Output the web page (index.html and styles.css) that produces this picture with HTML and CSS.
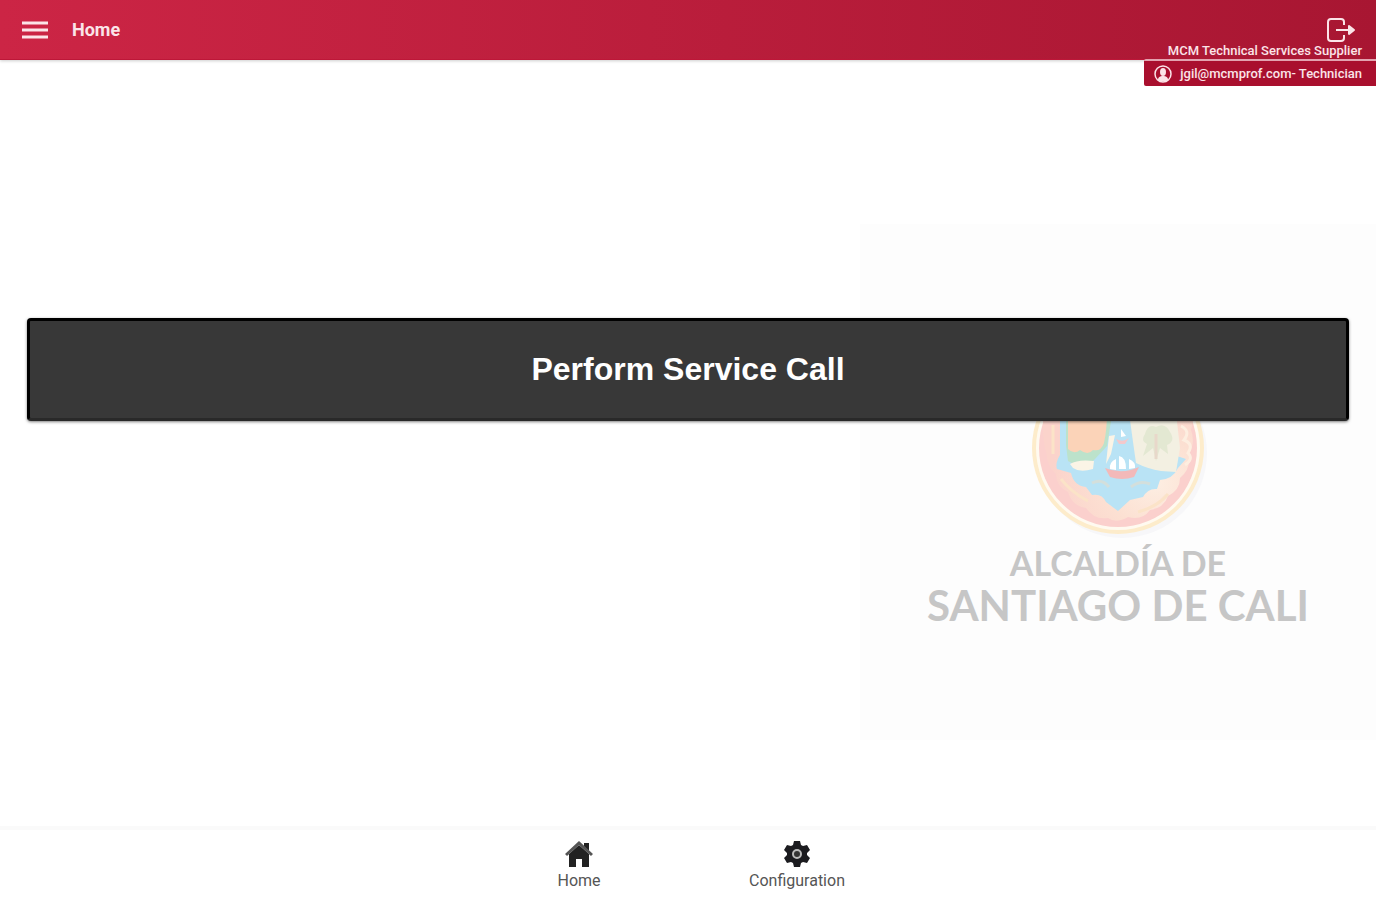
FILE: index.html
```html
<!DOCTYPE html>
<html lang="en">
<head>
    <title>Home</title>
    <meta charset="UTF-8">
    <meta name="viewport" content="width=device-width, initial-scale=1.0">
    <link rel="stylesheet" href="styles.css">
</head>
<body>
    <header class="toolbar">
        <button class="icon-btn" aria-label="Menu">
            <svg width="26" height="20" viewBox="0 0 26 20" stroke="currentColor" stroke-width="3">
                <path d="M0 3h26M0 10h26M0 17h26"/>
            </svg>
        </button>
        <h1>Home</h1>
        <div class="session">
            <button class="icon-btn" aria-label="Log out">
                <svg width="30" height="26" viewBox="0 0 30 26" fill="none" stroke="currentColor" stroke-width="2" stroke-linejoin="round">
                    <path d="M18 8V5a3 3 0 0 0-3-3H5a3 3 0 0 0-3 3v16a3 3 0 0 0 3 3h10a3 3 0 0 0 3-3v-3M10 13h17"/>
                    <path d="M23 9l5 4-5 4z" fill="currentColor"/>
                </svg>
            </button>
            <span>MCM Technical Services Supplier</span>
        </div>
        <div class="account">
            <svg width="18" height="18" viewBox="0 0 18 18">
                <circle cx="9" cy="9" r="8" fill="none" stroke="currentColor" stroke-width="1.5"/>
                <ellipse cx="9" cy="7" rx="3" ry="4" fill="currentColor"/>
                <path d="M4 15c0-3 2-4 5-4s5 1 5 4c-3 2-7 2-10 0z" fill="currentColor"/>
            </svg>
            <span>jgil@mcmprof.com- Technician</span>
        </div>
    </header>

    <main>
        <div class="watermark">
            <svg class="emblem" viewBox="0 0 180 180" width="180" height="180">
                <defs>
                    <radialGradient id="rim" cx="0.75" cy="0.7" r="0.7">
                        <stop offset="0" stop-color="#fdeee2"/>
                        <stop offset="0.5" stop-color="#fce0d2"/>
                        <stop offset="1" stop-color="#fbd3cb"/>
                    </radialGradient>
                </defs>
                <circle cx="94" cy="95" r="85" fill="#f7f7f9"/>
                <circle cx="90" cy="90" r="86" fill="#fdeccb"/>
                <circle cx="90" cy="90" r="82" fill="#fffaf0"/>
                <circle cx="90" cy="90" r="79" fill="#fbd0cd"/>
                <path d="M18 40Q12 72 18 94q2 16 10 22 0 12 12 18 4 14 18 16 8 12 22 10 8 6 20-1 14 4 22-7 14-2 18-14 12-6 12-18 12-10 8-24 8-10 3-24 6-20-4-35z" fill="url(#rim)"/>
                <path d="M32 55v42q-5 8-3 14l14 4q3 13 15 14l6 8q10-2 14 7l12 9 12-11 13-3q5-9 14-8l3-9q13-1 18-12l8-9-9-3V55z" fill="#b9e3f5"/>
                <path d="M38 55v32l2 16q14 9 26-1l13-14 5-31z" fill="#bce2cb"/>
                <path d="M40 55v36q6 6 12 1 8 6 13 0 8 2 11-7 3-14 3-30z" fill="#fbd3b8"/>
                <path d="M42 106q8-5 24-3l-1 8q-13 4-20-1zM81 78l6-1-4 19-5 10z" fill="#fbf4e6"/>
                <path d="M101 55l5 36 2 14q12 6 25 8l15 1 4-24-4-35z" fill="#f3f0e2"/>
                <path d="M117 76q3-11 11-7 9-5 14 5 6 9-3 13l1 9-8-6-4 13-3-13-10 8 4-12q-7-3-2-10z" fill="#e3e8d2"/>
                <path d="M128 76v25" stroke="#e8d8ca" stroke-width="3"/>
                <path d="M77 110q17 7 34-1l-5 10q-12 4-24 0z" fill="#f3b9b9"/>
                <path d="M82 111q-1-7 6-10v11zM91 111V98q7 1 7 13zM101 111v-10q7 3 6 9z" fill="#fff"/>
                <path d="M88 81q7 4 13-1l-4 6h-6z" fill="#f4c8cb"/>
                <path d="M93 79v-8l5 7z" fill="#fff"/>
                <path d="M64 125q10-5 17 4M103 129q9-7 19-3" fill="none" stroke="#d3dfdc" stroke-width="3"/>
                <path d="M153 68q10 5 3 14 10 4 4 13 6 6-3 12" fill="none" stroke="#fdeee0" stroke-width="3"/>
                <path d="M25 67v29M33 121q10 13 27 22M110 154q19-5 30-18" fill="none" stroke="#fbe3c8" stroke-width="3"/>
            </svg>
            <p>ALCALDÍA DE</p>
            <p class="city">SANTIAGO DE CALI</p>
        </div>
        <button class="call-btn">Perform Service Call</button>
    </main>

    <nav class="tabs">
        <a href="#home">
            <svg width="28" height="28" viewBox="0 0 28 28">
                <path d="M19 3h5v8l-5-4z" fill="#222"/>
                <path d="M4 14l10-9 10 9v13h-7v-8h-6v8H4z" fill="#222"/>
                <path d="M1 15L14 3l13 12" fill="none" stroke="#555" stroke-width="3"/>
            </svg>
            Home
        </a>
        <a href="#configuration">
            <svg width="28" height="28" viewBox="0 0 28 28">
                <path d="M11 1h6l1 4 2 1 4-1 3 5-3 3v2l3 3-3 5-4-1-2 1-1 4h-6l-1-4-2-1-4 1-3-5 3-3v-2l-3-3 3-5 4 1 2-1z" fill="#1b1b1f"/>
                <circle cx="14" cy="14" r="4" fill="#333" stroke="#bbb" stroke-width="2"/>
            </svg>
            Configuration
        </a>
    </nav>
</body>
</html>
```
FILE: styles.css
```css
:root {
    --red: #cc2545;
    --red-dark: #a81632;
    --badge: #a90f2e;
    --button: #383838;
}

* {
    margin: 0;
    padding: 0;
    box-sizing: border-box;
}

body {
    font-family: Roboto, sans-serif;
    min-height: 100vh;
    display: flex;
    flex-direction: column;
    background: #fff;
    color: #444;
}

button {
    border: none;
    background: none;
    color: inherit;
    cursor: pointer;
}

svg {
    display: block;
}

.toolbar {
    position: relative;
    z-index: 1;
    display: flex;
    align-items: center;
    gap: 24px;
    height: 60px;
    padding: 0 14px 0 22px;
    background: linear-gradient(90deg, var(--red), var(--red-dark));
    border-bottom: 1px solid #bd1738;
    box-shadow: 0 1px 3px rgba(0, 0, 0, 0.2);
    color: #fbe4e8;
}

.toolbar h1 {
    font-size: 18px;
    font-weight: 700;
}

.session {
    display: flex;
    flex-direction: column;
    align-items: flex-end;
    align-self: flex-end;
    margin-left: auto;
    font-size: 13px;
    line-height: 16px;
    font-weight: 500;
}

.session .icon-btn {
    padding-right: 6px;
}

/* hangs below the toolbar, flush with the right edge */
.account {
    position: absolute;
    top: 100%;
    right: 0;
    display: flex;
    align-items: center;
    gap: 8px;
    height: 27px;
    padding: 0 14px 0 10px;
    background: var(--badge);
    border-top: 2px solid #e3a3b0;
    border-radius: 2px 0 0 2px;
    font-size: 13px;
    font-weight: 500;
}

main {
    position: relative;
    flex: 1;
    padding: 258px 27px 0;
}

.watermark {
    position: absolute;
    top: 164px;
    right: 0;
    width: 37.5%;
    aspect-ratio: 1;
    display: flex;
    flex-direction: column;
    align-items: center;
    justify-content: flex-end;
    padding-bottom: 114px;
    background: #fdfdfd;
    color: #c6c6c6;
    font-family: Lato, sans-serif;
    font-size: 34px;
    line-height: 42px;
    font-weight: 700;
}

.watermark .emblem {
    margin-bottom: 4px;
}

.watermark .city {
    font-size: 42px;
}

.call-btn {
    position: relative;
    width: 100%;
    height: 103px;
    background: var(--button);
    border: 3px solid #000;
    border-bottom-color: #292929;
    border-radius: 4px;
    box-shadow: 0 1px 3px rgba(0, 0, 0, 0.5);
    color: #fff;
    font-family: "Liberation Sans", sans-serif;
    font-size: 32px;
    font-weight: 700;
}

.tabs {
    display: flex;
    justify-content: center;
    height: 74px;
    border-top: 4px solid #fafafa;
}

.tabs a {
    display: flex;
    flex-direction: column;
    align-items: center;
    gap: 4px;
    width: 218px;
    padding-top: 10px;
    color: #555;
    font-size: 16px;
    line-height: 18px;
    text-decoration: none;
}
```
